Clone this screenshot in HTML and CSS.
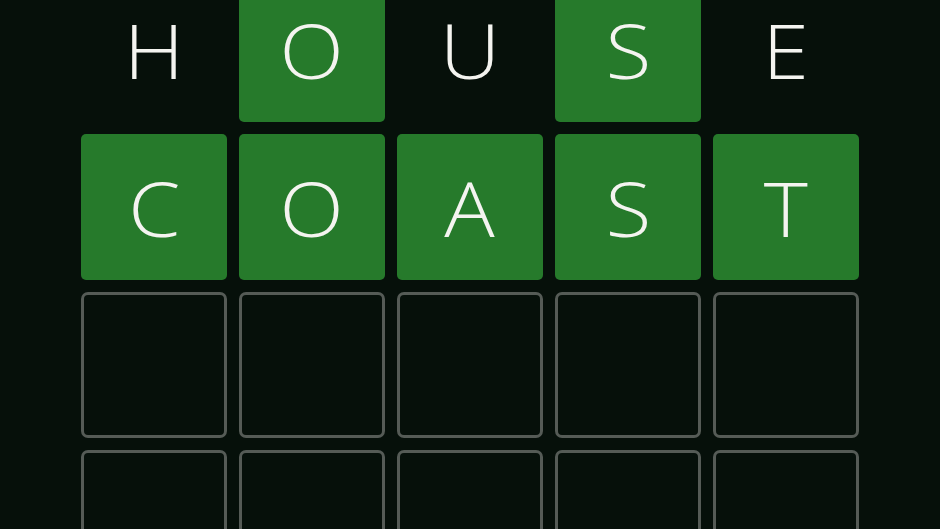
FILE: index.html
```html
<!DOCTYPE html>
<html lang="en">
<head>
<meta charset="utf-8">
<title>Word grid</title>
<link rel="stylesheet" href="styles.css">
</head>
<body>
<main class="board">
  <div class="tile absent"><span class="glyph">H</span></div>
  <div class="tile correct"><span class="glyph">O</span></div>
  <div class="tile absent"><span class="glyph">U</span></div>
  <div class="tile correct"><span class="glyph">S</span></div>
  <div class="tile absent"><span class="glyph">E</span></div>

  <div class="tile correct"><span class="glyph">C</span></div>
  <div class="tile correct"><span class="glyph">O</span></div>
  <div class="tile correct"><span class="glyph">A</span></div>
  <div class="tile correct"><span class="glyph">S</span></div>
  <div class="tile correct"><span class="glyph">T</span></div>

  <div class="tile empty"></div>
  <div class="tile empty"></div>
  <div class="tile empty"></div>
  <div class="tile empty"></div>
  <div class="tile empty"></div>

  <div class="tile empty"></div>
  <div class="tile empty"></div>
  <div class="tile empty"></div>
  <div class="tile empty"></div>
  <div class="tile empty"></div>
</main>
</body>
</html>
```
FILE: styles.css
```css
html, body {
  margin: 0;
  height: 100%;
  overflow: hidden;
  background: #06100a;
}

.board {
  display: grid;
  grid-template-columns: repeat(5, 146px);
  grid-auto-rows: 146px;
  gap: 12px;
  justify-content: center;
  margin-top: -24px;
}

.tile {
  box-sizing: border-box;
  display: flex;
  align-items: center;
  justify-content: center;
  border-radius: 5px;
  color: #f4f4f0;
  font-family: "Open Sans", "DejaVu Sans", sans-serif;
  font-weight: 330;
  font-size: 75px;
  line-height: 1;
}

/* widen the letters towards a geometric look */
.glyph {
  display: inline-block;
  transform: translateY(1px) scaleX(1.12);
}

.correct {
  background: #267a2b;
}

.absent {
  background: transparent;
}

.empty {
  border: 3px solid #555b56;
  border-radius: 7px;
}
```
